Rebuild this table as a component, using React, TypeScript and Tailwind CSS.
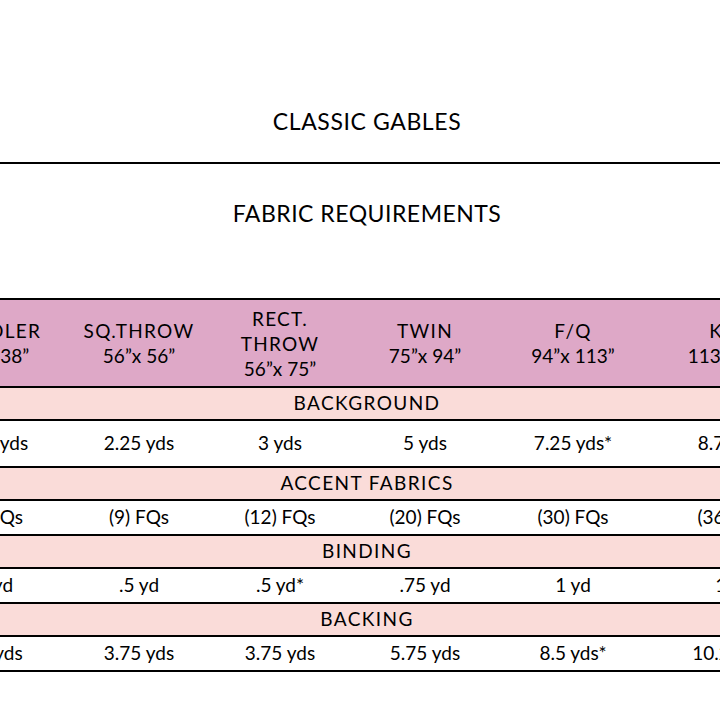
import React from "react";

// header columns of the quilt sizes
const sizes: string[][] = [
    ["TODDLER", "38”x 38”"],
    ["SQ.THROW", "56”x 56”"],
    ["RECT.", "THROW", "56”x 75”"],
    ["TWIN", "75”x 94”"],
    ["F/Q", "94”x 113”"],
    ["KING", "113”x 113”"],
];

const sections: { title: string; first?: boolean; values: string[] }[] = [
    { title: "BACKGROUND", first: true, values: ["1.25 yds", "2.25 yds", "3 yds", "5 yds", "7.25 yds*", "8.75 yds"] },
    { title: "ACCENT FABRICS", values: ["(4) FQs", "(9) FQs", "(12) FQs", "(20) FQs", "(30) FQs", "(36) FQs"] },
    { title: "BINDING", values: [".5 yd", ".5 yd", ".5 yd*", ".75 yd", "1 yd", "1 yd"] },
    { title: "BACKING", values: ["2.5 yds", "3.75 yds", "3.75 yds", "5.75 yds", "8.5 yds*", "10.25 yds"] },
];

const cols = "grid grid-cols-[146px_146px_136px_154px_142px_170px]";

const App: React.FC = () => {
    return (
        <div className="w-[720px] h-[720px] overflow-hidden bg-white text-black font-['Lato','Open_Sans',sans-serif]">
            <div className="w-[894px] ml-[-80px]">
                {/* 見出し */}
                <div className="h-[162px] flex justify-center pt-[110px]">
                    <h1 className="text-[23px] leading-none tracking-[0.6px]">CLASSIC GABLES</h1>
                </div>
                <div className="border-t-2 border-black" />
                <div className="h-[134px] flex justify-center pt-[38px]">
                    <h2 className="text-[23px] leading-none tracking-[0.5px]">FABRIC REQUIREMENTS</h2>
                </div>

                {/* 表 */}
                <div className="border-t-2 border-black">
                    <div className={`${cols} h-[86px] bg-[#dea8c7] text-[19px] leading-[25px]`}>
                        {sizes.map((lines, i) => (
                            <div
                                key={i}
                                className={`flex flex-col items-center justify-center text-center ${i === 5 ? "pl-[12px]" : ""}`}
                            >
                                {lines.map((l, j) => (
                                    <span key={l} className={j === lines.length - 1 ? "" : "tracking-[1.3px]"}>
                                        {l}
                                    </span>
                                ))}
                            </div>
                        ))}
                    </div>
                    {sections.map((s) => (
                        <div key={s.title}>
                            <div className="border-t-2 border-black h-[33px] bg-[#fadcd9] flex items-center justify-center text-[19px] tracking-[1.4px]">
                                {s.title}
                            </div>
                            <div
                                className={`${cols} border-t-2 border-black ${s.first ? "h-[47px]" : "h-[35px]"} text-[19px] items-center`}
                            >
                                {s.values.map((v, i) => (
                                    <div key={i} className={`text-center ${i === 5 ? "pl-[8px]" : ""}`}>
                                        {v}
                                    </div>
                                ))}
                            </div>
                        </div>
                    ))}
                    <div className="border-t-2 border-black" />
                </div>
            </div>
        </div>
    );
};

export default App;
